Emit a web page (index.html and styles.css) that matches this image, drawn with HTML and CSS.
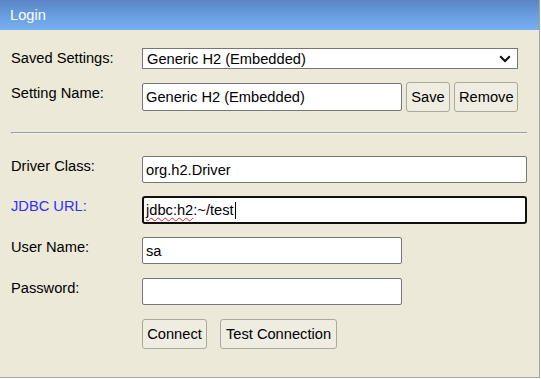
FILE: index.html
```html
<!DOCTYPE html>
<html>
<head>
<meta charset="utf-8">
<title>Login</title>
<link rel="stylesheet" href="styles.css">
</head>
<body>
<div class="window">
  <div class="titlebar">Login</div>
  <div class="content">
    <div class="row row-saved">
      <label class="lbl">Saved Settings:</label>
      <div class="select-wrap">
        <select class="select"><option>Generic H2 (Embedded)</option></select>
        <svg class="chev" width="12" height="8" viewBox="0 0 12 8"><path d="M1.2 1.2 L6 6 L10.8 1.2" stroke="#111" stroke-width="2" fill="none"/></svg>
      </div>
    </div>
    <div class="row row-name">
      <label class="lbl">Setting Name:</label>
      <input class="field short" type="text" value="Generic H2 (Embedded)">
      <button class="btn btn-save">Save</button>
      <button class="btn btn-remove">Remove</button>
    </div>
    <div class="sep"></div>
    <div class="row row-driver">
      <label class="lbl">Driver Class:</label>
      <input class="field long" type="text" value="org.h2.Driver">
    </div>
    <div class="row row-url">
      <label class="lbl link">JDBC URL:</label>
      <div class="field long focused" role="textbox"><span class="misspelled">jdbc:h2</span>:~/test<span class="caret"></span></div>
    </div>
    <div class="row row-user">
      <label class="lbl">User Name:</label>
      <input class="field short" type="text" value="sa">
    </div>
    <div class="row row-pass">
      <label class="lbl">Password:</label>
      <input class="field short" type="password" value="">
    </div>
    <div class="row row-buttons">
      <div class="spacer"></div>
      <button class="btn btn-connect">Connect</button>
      <button class="btn btn-test">Test Connection</button>
    </div>
  </div>
</div>
</body>
</html>
```

FILE: styles.css
```css
html, body {
  margin: 0;
  padding: 0;
  background: #ffffff;
}

body {
  font-family: "Liberation Sans", Arial, sans-serif;
  font-size: 14.667px;
  color: #000;
}

.window {
  width: 539px;
  height: 377px;
  border-right: 1px solid #a3a3a3;
  border-bottom: 1px solid #a3a3a3;
  background: #ece9d8;
  display: flex;
  flex-direction: column;
}

.titlebar {
  height: 30px;
  line-height: 30px;
  padding-left: 10px;
  color: #ffffff;
  background: linear-gradient(to bottom, #5985c5 0%, #6a9fe0 55%, #78b0f1 100%);
}

.content {
  padding-left: 11px;
  display: flex;
  flex-direction: column;
}

.row {
  display: flex;
  align-items: flex-start;
}

.lbl {
  width: 131px;
  flex: 0 0 131px;
  padding-top: 2px;
  line-height: normal;
}

.link {
  color: #2e2eff;
}

.row-saved { margin-top: 18px; }
.row-name { margin-top: 13px; }
.row-driver { margin-top: 22px; }
.row-url { margin-top: 13px; }
.row-user { margin-top: 13px; }
.row-pass { margin-top: 14px; }
.row-buttons { margin-top: 14px; }

.row-name .lbl { padding-top: 3px; }
.row-name .field { margin-top: 1px; height: 28px; }

.select-wrap {
  position: relative;
  width: 376px;
  height: 21px;
}

.select {
  appearance: none;
  -webkit-appearance: none;
  box-sizing: border-box;
  width: 376px;
  height: 21px;
  margin: 0;
  padding: 0 0 0 4px;
  border: 1px solid #767676;
  border-radius: 0;
  background: #ffffff;
  font-family: inherit;
  font-size: 14.667px;
  color: #000;
}

.chev {
  position: absolute;
  left: 357px;
  top: 7px;
  pointer-events: none;
}

.field {
  box-sizing: border-box;
  height: 27px;
  margin: 0;
  padding: 0 3px;
  border: 1px solid #767676;
  border-radius: 2px;
  background: #ffffff;
  font-family: inherit;
  font-size: 14.667px;
  color: #000;
  outline: none;
}

.short { width: 260px; }
.long { width: 385px; }

.focused {
  height: 28px;
  border: 2px solid #101010;
  border-radius: 3px;
  padding: 0 2px;
  display: flex;
  align-items: center;
  white-space: pre;
}

.misspelled {
  text-decoration: underline wavy #e02020;
  text-decoration-skip-ink: none;
  text-underline-offset: 2px;
  text-decoration-thickness: 1px;
}

.caret {
  display: inline-block;
  width: 1px;
  height: 17px;
  margin-left: 1px;
  background: #000;
}

.btn {
  box-sizing: border-box;
  height: 30px;
  margin: 0;
  padding: 0 4px;
  border: 1px solid #aba89c;
  border-radius: 3px;
  background: #efece2;
  font-family: inherit;
  font-size: 14.667px;
  color: #000;
}

.btn-save { margin-left: 4px; width: 44px; }
.btn-remove { margin-left: 4px; width: 64px; }
.btn-connect { width: 65px; }
.btn-test { margin-left: 13px; width: 117px; }

.spacer {
  width: 131px;
  flex: 0 0 131px;
}

.sep {
  margin-top: 20px;
  width: 515px;
  height: 0;
  border-top: 1px solid #9c9c9c;
  border-left: 1px solid #9c9c9c;
  border-bottom: 1px solid #f2f2f2;
}
```
